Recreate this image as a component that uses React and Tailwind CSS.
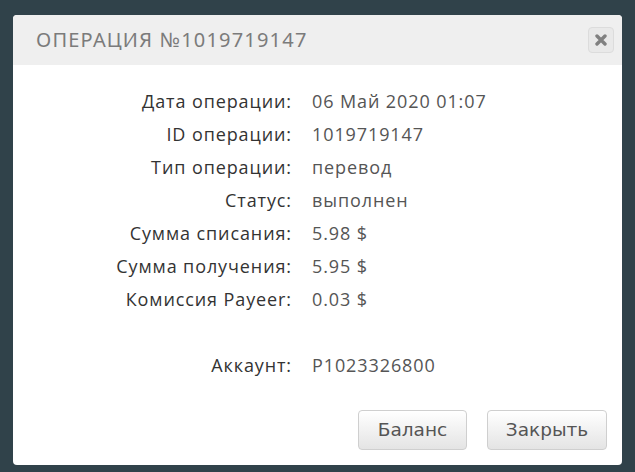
const rows = [
  ['Дата операции:', '06 Май 2020 01:07'],
  ['ID операции:', '1019719147'],
  ['Тип операции:', 'перевод'],
  ['Статус:', 'выполнен'],
  ['Сумма списания:', '5.98 $'],
  ['Сумма получения:', '5.95 $'],
  ['Комиссия Payeer:', '0.03 $'],
  ['', ''],
  ['Аккаунт:', 'P1023326800'],
]

function Button({ children, className }) {
  return (
    <button
      className={`h-10 rounded-[4px] border border-[#cfcfcf] bg-gradient-to-b from-white to-[#e4e4e4] text-[18.5px] text-[#555] shadow-[inset_0_1px_0_#fff] ${className}`}
      style={{ fontFamily: '"DejaVu Sans", sans-serif' }}
    >
      {children}
    </button>
  )
}

export default function App() {
  return (
    <div className="w-[635px] h-[472px] bg-[#30424a] pt-[15px] pl-[13px] overflow-hidden">
      <div className="w-[609px] h-[450px] bg-white rounded-[4px] overflow-hidden flex flex-col">
        {/* Header */}
        <div className="h-[50px] bg-[#efefef] flex items-center justify-between pl-[23px] pr-[8px]">
          <h1
            className="text-[20px] uppercase tracking-[0.06em] text-[#7b7b7b]"
            style={{ fontFamily: '"Noto Sans", sans-serif' }}
          >
            Операция №1019719147
          </h1>
          <button className="w-[26px] h-[26px] rounded-[4px] border border-[#dcdcdc] bg-[#e9e9e9] flex items-center justify-center">
            <svg viewBox="0 0 12 12" className="w-[12px] h-[12px]">
              <path d="M2 2 L10 10 M10 2 L2 10" stroke="#808080" strokeWidth="3.4" strokeLinecap="round" />
            </svg>
          </button>
        </div>

        {/* Body */}
        <div
          className="grid grid-cols-[279px_1fr] gap-x-5 auto-rows-[33px] pt-[20px] text-[18px] tracking-[0.05em]"
          style={{ fontFamily: '"Open Sans", sans-serif' }}
        >
          {rows.map(([label, value], i) => (
            <div key={i} className="contents">
              <div className="text-right text-[#333] leading-[33px]">{label}</div>
              <div className="text-[#555] leading-[33px]">{value}</div>
            </div>
          ))}
        </div>

        {/* Footer */}
        <div className="mt-auto flex justify-end gap-5 pr-[15px] pb-[15px]">
          <Button className="w-[109px]">Баланс</Button>
          <Button className="w-[120px]">Закрыть</Button>
        </div>
      </div>
    </div>
  )
}
